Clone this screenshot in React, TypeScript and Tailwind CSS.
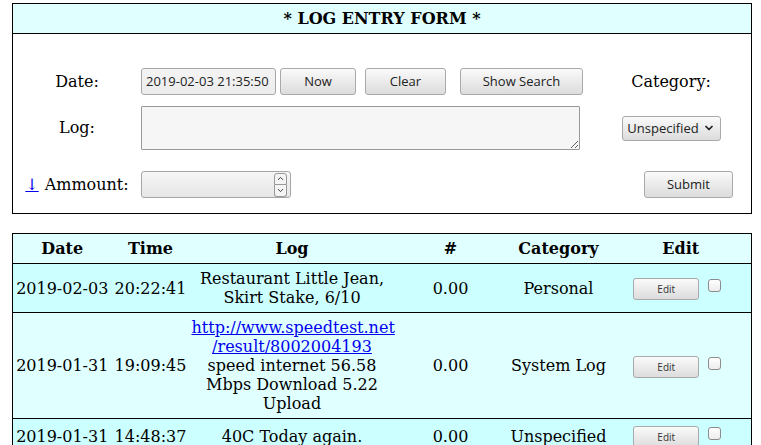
import { ChevronDown, ChevronUp } from 'lucide-react';

interface LogRow {
  date: string;
  time: string;
  log: React.ReactNode;
  amount: string;
  category: string;
  bg: string;
}

const btn =
  "rounded-[3px] border border-[#a9a9a9] bg-gradient-to-b from-[#fafafa] to-[#dcdcdc] font-['Open_Sans',sans-serif] text-[13px] text-[#222] leading-none";

const rows: LogRow[] = [
  {
    date: '2019-02-03',
    time: '20:22:41',
    log: (
      <>
        Restaurant Little Jean,
        <br />
        Skirt Stake, 6/10
      </>
    ),
    amount: '0.00',
    category: 'Personal',
    bg: 'bg-[#ccffff]',
  },
  {
    date: '2019-01-31',
    time: '19:09:45',
    log: (
      <>
        <a href="#" className="text-[#0000ee] underline">
          http://www.speedtest.net
          <br />
          /result/8002004193
        </a>
        <br />
        speed internet 56.58
        <br />
        Mbps Download 5.22
        <br />
        Upload
      </>
    ),
    amount: '0.00',
    category: 'System Log',
    bg: 'bg-[#e0ffff]',
  },
  {
    date: '2019-01-31',
    time: '14:48:37',
    log: '40C Today again.',
    amount: '0.00',
    category: 'Unspecified',
    bg: 'bg-[#ccffff]',
  },
];

const Checkbox = () => (
  <span className="inline-block w-[13px] h-[13px] rounded-[3px] border border-[#8c8c8c] bg-gradient-to-b from-white to-[#ececec] mt-[1px]" />
);

const App = () => {
  return (
    <div className="w-[761px] h-[445px] overflow-hidden bg-white font-['DejaVu_Serif',serif] text-[16px] text-black pt-[3px]">
      {/* Entry form */}
      <div className="ml-[12px] w-[740px] border border-black">
        <div className="h-[30px] flex items-center justify-center bg-[#e0ffff] border-b border-black font-bold">
          * LOG ENTRY FORM *
        </div>

        <div className="pt-[34px] pb-[15px]">
          {/* Date row */}
          <div className="flex items-center h-[27px]">
            <div className="w-[128px] text-center">Date:</div>
            <div className="w-[460px] flex items-center">
              <div className="w-[135px] h-[27px] flex items-center pl-[4px] rounded-[3px] border border-[#a6a6a6] bg-gradient-to-b from-[#f4f4f4] to-[#ececec] font-['Open_Sans',sans-serif] text-[13px] text-[#222]">
                2019-02-03 21:35:50
              </div>
              <button className={`${btn} ml-[4px] w-[76px] h-[27px]`}>Now</button>
              <button className={`${btn} ml-[9px] w-[81px] h-[27px]`}>Clear</button>
              <button className={`${btn} ml-[14px] w-[123px] h-[27px]`}>Show Search</button>
            </div>
            <div className="w-[140px] text-center">Category:</div>
          </div>

          {/* Log row */}
          <div className="flex items-center mt-[11px]">
            <div className="w-[128px] text-center">Log:</div>
            <div className="w-[460px]">
              <textarea className="block w-[439px] h-[44px] border border-[#999] bg-[#f6f6f6] rounded-[1px]" />
            </div>
            <div className="w-[140px] flex justify-center">
              <button
                className={`${btn} w-[99px] h-[25px] flex items-center justify-center gap-[4px]`}
              >
                Unspecified
                <ChevronDown size={12} strokeWidth={3.5} />
              </button>
            </div>
          </div>

          {/* Amount row */}
          <div className="flex items-center mt-[21px] h-[27px]">
            <div className="w-[128px] flex justify-center items-center gap-[6px]">
              <a href="#" className="text-[#0000ee] underline">
                ↓
              </a>
              <span>Ammount:</span>
            </div>
            <div className="w-[460px]">
              <div className="w-[150px] h-[27px] flex items-center justify-end pr-[3px] rounded-[3px] border border-[#a6a6a6] bg-gradient-to-b from-[#f6f6f6] to-[#e6e6e6]">
                <div className="flex flex-col">
                  <span className="w-[13px] h-[12px] flex items-center justify-center rounded-t-[3px] border border-[#999] bg-[#f4f4f4] text-[#333]">
                    <ChevronUp size={9} strokeWidth={2.5} />
                  </span>
                  <span className="w-[13px] h-[12px] flex items-center justify-center rounded-b-[3px] border border-t-0 border-[#999] bg-[#f4f4f4] text-[#333]">
                    <ChevronDown size={9} strokeWidth={2.5} />
                  </span>
                </div>
              </div>
            </div>
            <div className="w-[140px] flex justify-end pr-[8px]">
              <button className={`${btn} w-[89px] h-[27px]`}>Submit</button>
            </div>
          </div>
        </div>
      </div>

      {/* Log table */}
      <table className="mt-[19px] ml-[12px] w-[740px] table-fixed border-collapse border border-black leading-[19px]">
        <colgroup>
          <col className="w-[99px]" />
          <col className="w-[78px]" />
          <col className="w-[205px]" />
          <col className="w-[112px]" />
          <col className="w-[104px]" />
          <col className="w-[141px]" />
        </colgroup>
        <thead>
          <tr className="bg-[#e0ffff] font-bold">
            <th className="py-[5px]">Date</th>
            <th className="py-[5px]">Time</th>
            <th className="py-[5px]">Log</th>
            <th className="py-[5px]">#</th>
            <th className="py-[5px]">Category</th>
            <th className="py-[5px]">Edit</th>
          </tr>
        </thead>
        <tbody>
          {rows.map((r, i) => (
            <tr key={i} className={`${r.bg} border-t border-black`}>
              <td className="py-[5px] text-center align-middle">{r.date}</td>
              <td className="py-[5px] text-center align-middle">{r.time}</td>
              <td className="py-[5px] px-[2px] text-center align-middle">{r.log}</td>
              <td className="py-[5px] text-center align-middle">{r.amount}</td>
              <td className="py-[5px] text-center align-middle">{r.category}</td>
              <td className="py-[5px] align-middle">
                <div className="flex items-start justify-center gap-[9px] pt-[2px] pr-[7px]">
                  <button
                    className={`${btn} w-[66px] h-[22px] !text-[10px] !text-[#333]`}
                  >
                    Edit
                  </button>
                  <Checkbox />
                </div>
              </td>
            </tr>
          ))}
        </tbody>
      </table>
    </div>
  );
};

export default App;
